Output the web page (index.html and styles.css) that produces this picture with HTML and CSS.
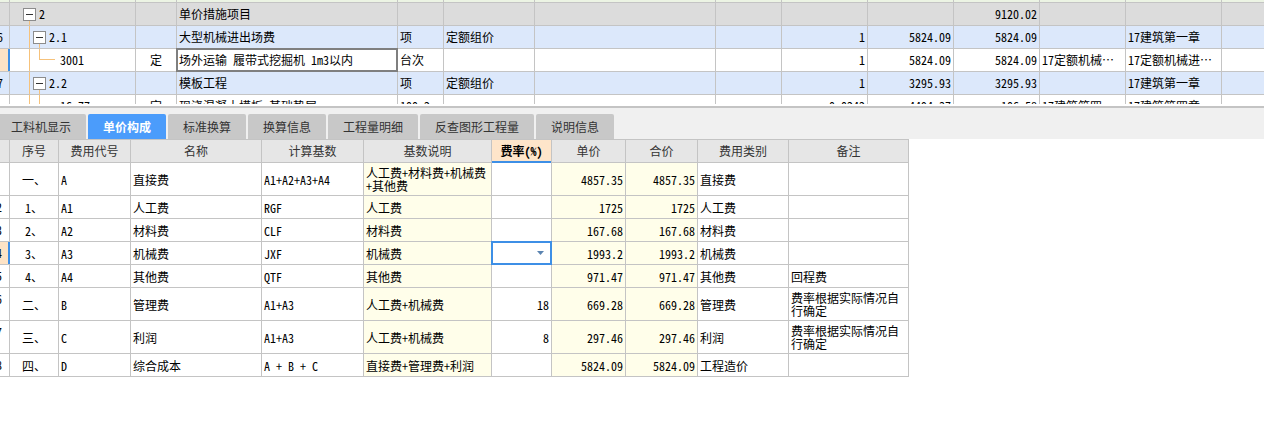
FILE: index.html
```html
<!DOCTYPE html>
<html lang="zh-CN">
<head>
<meta charset="utf-8">
<title>单价构成</title>
<link rel="stylesheet" href="styles.css">
</head>
<body>
<div class="top-pane">
  <div class="ttable">
    <div class="trow strip">
      <div class="n"></div><div></div><div></div><div></div><div></div><div></div><div></div><div></div><div></div><div></div><div></div><div></div><div></div><div></div>
    </div>
    <div class="trow gray">
      <div class="n"></div>
      <div class="tree"><svg width="29" height="22" viewBox="0 0 29 22"><path d="M19.5 18V22" stroke="#f6c27b"/><rect x="13.5" y="5.5" width="12" height="12" fill="#fff" stroke="#8c8c8c"/><path d="M16 11.5H23" stroke="#333"/></svg><span>2</span></div>
      <div class="c"></div>
      <div class="c">单价措施项目</div>
      <div class="c"></div><div class="c"></div><div class="c"></div><div class="c"></div><div class="c"></div><div class="c"></div>
      <div class="c r">9120.02</div>
      <div class="c"></div><div class="c"></div><div class="c"></div>
    </div>
    <div class="trow blue">
      <div class="n"><span class="rn">6</span></div>
      <div class="tree"><svg width="39" height="22" viewBox="0 0 39 22"><path d="M19.5 0V22M29.5 18V22" stroke="#f6c27b"/><rect x="23.5" y="5.5" width="12" height="12" fill="#fff" stroke="#8c8c8c"/><path d="M26 11.5H33" stroke="#333"/></svg><span>2.1</span></div>
      <div class="c"></div>
      <div class="c">大型机械进出场费</div>
      <div class="c">项</div>
      <div class="c">定额组价</div>
      <div class="c"></div><div class="c"></div>
      <div class="c r">1</div>
      <div class="c r">5824.09</div>
      <div class="c r">5824.09</div>
      <div class="c"></div>
      <div class="c">17建筑第一章</div>
      <div class="c"></div>
    </div>
    <div class="trow white">
      <div class="n sel"></div>
      <div class="tree"><svg width="50" height="22" viewBox="0 0 50 22"><path d="M19.5 0V22M29.5 0V11M29 10.5H45" stroke="#f6c27b"/></svg><span>3001</span></div>
      <div class="c ctr">定</div>
      <div class="c focus">场外运输 履带式挖掘机 1m3以内</div>
      <div class="c">台次</div>
      <div class="c"></div><div class="c"></div><div class="c"></div>
      <div class="c r">1</div>
      <div class="c r">5824.09</div>
      <div class="c r">5824.09</div>
      <div class="c">17定额机械进出场费</div>
      <div class="c">17定额机械进出场费</div>
      <div class="c"></div>
    </div>
    <div class="trow blue">
      <div class="n"><span class="rn">7</span></div>
      <div class="tree"><svg width="39" height="22" viewBox="0 0 39 22"><path d="M19.5 0V22M29.5 18V22" stroke="#f6c27b"/><rect x="23.5" y="5.5" width="12" height="12" fill="#fff" stroke="#8c8c8c"/><path d="M26 11.5H33" stroke="#333"/></svg><span>2.2</span></div>
      <div class="c"></div>
      <div class="c">模板工程</div>
      <div class="c">项</div>
      <div class="c">定额组价</div>
      <div class="c"></div><div class="c"></div>
      <div class="c r">1</div>
      <div class="c r">3295.93</div>
      <div class="c r">3295.93</div>
      <div class="c"></div>
      <div class="c">17建筑第一章</div>
      <div class="c"></div>
    </div>
    <div class="trow white">
      <div class="n"></div>
      <div class="tree"><svg width="50" height="22" viewBox="0 0 50 22"><path d="M19.5 0V22M29.5 0V11M29 10.5H45" stroke="#f6c27b"/></svg><span>16-77</span></div>
      <div class="c ctr">定</div>
      <div class="c">现浇混凝土模板 基础垫层</div>
      <div class="c">100m2</div>
      <div class="c"></div><div class="c"></div><div class="c"></div>
      <div class="c r">0.0242</div>
      <div class="c r">4494.37</div>
      <div class="c r">106.58</div>
      <div class="c">17建筑第四章混凝土及钢筋混凝土工程</div>
      <div class="c">17建筑第四章 混凝土及钢筋混凝土工程</div>
      <div class="c"></div>
    </div>
  </div>
</div>
<div class="splitter"></div>
<div class="tabbar">
  <div class="tabs">
    <div class="tab">工料机显示</div>
    <div class="tab active">单价构成</div>
    <div class="tab">标准换算</div>
    <div class="tab">换算信息</div>
    <div class="tab">工程量明细</div>
    <div class="tab">反查图形工程量</div>
    <div class="tab">说明信息</div>
  </div>
</div>
<div class="lower">
  <div class="ltable">
    <div class="lrow head">
      <div class="h"></div>
      <div class="h">序号</div>
      <div class="h">费用代号</div>
      <div class="h">名称</div>
      <div class="h">计算基数</div>
      <div class="h">基数说明</div>
      <div class="h hot">费率(%)</div>
      <div class="h">单价</div>
      <div class="h">合价</div>
      <div class="h">费用类别</div>
      <div class="h">备注</div>
    </div>
    <div class="lrow tall">
      <div class="n"></div>
      <div class="d ctr">一、</div>
      <div class="d">A</div>
      <div class="d">直接费</div>
      <div class="d">A1+A2+A3+A4</div>
      <div class="d y wrap">人工费+材料费+机械费+其他费</div>
      <div class="d"></div>
      <div class="d y r">4857.35</div>
      <div class="d y r">4857.35</div>
      <div class="d">直接费</div>
      <div class="d"></div>
    </div>
    <div class="lrow">
      <div class="n"><span class="rn lo">2</span></div>
      <div class="d ctr">1、</div>
      <div class="d">A1</div>
      <div class="d">人工费</div>
      <div class="d">RGF</div>
      <div class="d y">人工费</div>
      <div class="d"></div>
      <div class="d y r">1725</div>
      <div class="d y r">1725</div>
      <div class="d">人工费</div>
      <div class="d"></div>
    </div>
    <div class="lrow">
      <div class="n"><span class="rn lo">3</span></div>
      <div class="d ctr">2、</div>
      <div class="d">A2</div>
      <div class="d">材料费</div>
      <div class="d">CLF</div>
      <div class="d y">材料费</div>
      <div class="d"></div>
      <div class="d y r">167.68</div>
      <div class="d y r">167.68</div>
      <div class="d">材料费</div>
      <div class="d"></div>
    </div>
    <div class="lrow">
      <div class="n sel"><span class="rn lo">4</span></div>
      <div class="d ctr">3、</div>
      <div class="d">A3</div>
      <div class="d">机械费</div>
      <div class="d">JXF</div>
      <div class="d y">机械费</div>
      <div class="d editing"><svg width="7" height="4" viewBox="0 0 7 4"><path d="M0 0H7L3.5 4Z" fill="#5b84b1"/></svg></div>
      <div class="d y r">1993.2</div>
      <div class="d y r">1993.2</div>
      <div class="d">机械费</div>
      <div class="d"></div>
    </div>
    <div class="lrow">
      <div class="n"><span class="rn lo">5</span></div>
      <div class="d ctr">4、</div>
      <div class="d">A4</div>
      <div class="d">其他费</div>
      <div class="d">QTF</div>
      <div class="d y">其他费</div>
      <div class="d"></div>
      <div class="d y r">971.47</div>
      <div class="d y r">971.47</div>
      <div class="d">其他费</div>
      <div class="d">回程费</div>
    </div>
    <div class="lrow tall">
      <div class="n"><span class="rn lo">6</span></div>
      <div class="d ctr">二、</div>
      <div class="d">B</div>
      <div class="d">管理费</div>
      <div class="d">A1+A3</div>
      <div class="d y">人工费+机械费</div>
      <div class="d r">18</div>
      <div class="d y r">669.28</div>
      <div class="d y r">669.28</div>
      <div class="d">管理费</div>
      <div class="d wrap">费率根据实际情况自行确定</div>
    </div>
    <div class="lrow tall">
      <div class="n"><span class="rn lo">7</span></div>
      <div class="d ctr">三、</div>
      <div class="d">C</div>
      <div class="d">利润</div>
      <div class="d">A1+A3</div>
      <div class="d y">人工费+机械费</div>
      <div class="d r">8</div>
      <div class="d y r">297.46</div>
      <div class="d y r">297.46</div>
      <div class="d">利润</div>
      <div class="d wrap">费率根据实际情况自行确定</div>
    </div>
    <div class="lrow">
      <div class="n"><span class="rn lo">8</span></div>
      <div class="d ctr">四、</div>
      <div class="d">D</div>
      <div class="d">综合成本</div>
      <div class="d">A + B + C</div>
      <div class="d y">直接费+管理费+利润</div>
      <div class="d"></div>
      <div class="d y r">5824.09</div>
      <div class="d y r">5824.09</div>
      <div class="d">工程造价</div>
      <div class="d"></div>
    </div>
  </div>
</div>
</body>
</html>
```

FILE: styles.css
```css
* { box-sizing: border-box; }

body {
  margin: 0;
  width: 1264px;
  height: 431px;
  overflow: hidden;
  background: #fff;
  color: #000;
  font-family: "Noto Sans Mono CJK SC", "Liberation Mono", "Noto Sans CJK SC", monospace;
  font-size: 12px;
}

/* ---------- top pane ---------- */
.top-pane {
  height: 104px;
  overflow: hidden;
}

.ttable {
  display: flex;
  flex-direction: column;
  row-gap: 1px;
  background: #c4c4c4;
}

.trow {
  display: grid;
  grid-template-columns: 9px 125px 40px 220px 45px 90px 180px 65px 85px 85px 85px 85px 95px 42px;
  column-gap: 1px;
  height: 22px;
  flex-shrink: 0;
}

.trow.strip { height: 2px; }
.trow.strip > div { background: #ecf4e4; }
.trow.gray > div { background: #dcdcdc; }
.trow.blue > div { background: #dce8fb; }
.trow.white > div { background: #fff; }
.trow > .n { background: #fff; }

.n {
  overflow: hidden;
  white-space: nowrap;
  line-height: 22px;
  position: relative;
}

.trow > .n.sel,
.lrow > .n.sel {
  background: #fde3c6;
  box-shadow: inset -1px 0 0 #3d8fe6, 1px 0 0 #3d8fe6;
}

.rn {
  display: inline-block;
  margin-left: -3px;
}

.rn.lo { margin-left: -4px; }

.c {
  overflow: hidden;
  white-space: nowrap;
  text-overflow: ellipsis;
  padding: 0 2px;
  line-height: 22px;
}

.r { text-align: right; padding-right: 2px; }
.ctr { text-align: center; }

.tree {
  display: flex;
  align-items: center;
  white-space: nowrap;
  overflow: hidden;
  line-height: 22px;
}
.tree svg { display: block; flex-shrink: 0; }

.focus {
  position: relative;
  z-index: 1;
  outline: 2px solid #7f7f7f;
  outline-offset: -1px;
}

/* ---------- splitter & tabs ---------- */
.splitter {
  height: 4px;
  border-bottom: 2px solid #c4c4c4;
  background: #fff;
}

.tabbar {
  height: 31px;
  padding-top: 6px;
  background: #f0f0f0;
  overflow: hidden;
}

.tabs {
  display: flex;
  column-gap: 2px;
  margin-left: -4px;
}

.tab {
  height: 25px;
  line-height: 25px;
  padding: 0 15px;
  background: #c8c8c8;
  color: #333;
  border-radius: 2px 2px 0 0;
  font-family: "Noto Sans CJK SC", sans-serif;
  font-size: 12px;
  white-space: nowrap;
}

.tab.active {
  background: #4b9cfb;
  color: #fff;
  font-weight: bold;
}

/* ---------- lower table ---------- */
.lower {
  background: #fff;
}

.ltable {
  display: flex;
  flex-direction: column;
  row-gap: 1px;
  width: 909px;
  padding: 1px 1px 1px 0;
  background: #c4c4c4;
}

.lrow {
  display: grid;
  grid-template-columns: 9px 48px 71px 130px 101px 127px 59px 73px 71px 90px 119px;
  column-gap: 1px;
  height: 22px;
}

.lrow.tall { height: 32px; }

.lrow > div { background: #fff; }

.lrow.head > .h {
  background: #e6e6e6;
  color: #333;
  text-align: center;
  line-height: 22px;
  font-family: "Noto Sans CJK SC", sans-serif;
  white-space: nowrap;
}

.lrow.head > .h.hot {
  background: #fee5ca;
  color: #000;
  font-weight: bold;
  box-shadow: inset 0 -1px 0 #3d8fe6, 0 1px 0 #3d8fe6;
  font-family: "Noto Sans Mono CJK SC", "Liberation Mono", "Noto Sans CJK SC", monospace;
}

.d {
  display: flex;
  align-items: center;
  padding: 0 2px;
  line-height: 13px;
  white-space: nowrap;
  overflow: hidden;
}

.d.ctr { justify-content: center; }
.d.r { justify-content: flex-end; padding-right: 2px; }
.d.wrap { white-space: normal; }
.lrow > .d.y { background: #fffeea; }

.d.editing {
  position: relative;
  z-index: 1;
  justify-content: flex-end;
  padding-right: 7px;
  outline: 2px solid #3d8fe6;
  outline-offset: -1px;
}
.d.editing svg { display: block; }
```
